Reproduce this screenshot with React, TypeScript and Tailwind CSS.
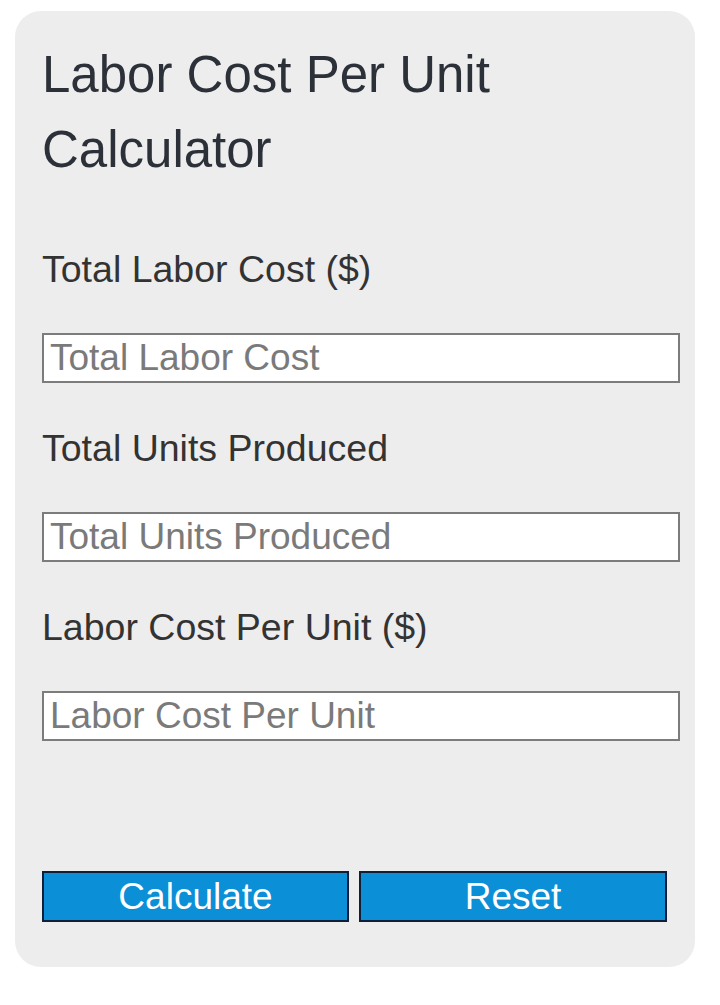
import React, { useState } from 'react';

const Field = ({
  label,
  placeholder,
  value,
  onChange,
  readOnly,
}: {
  label: string;
  placeholder: string;
  value: string;
  onChange?: (v: string) => void;
  readOnly?: boolean;
}) => (
  <div className="flex flex-col">
    <label className="text-[37.5px] leading-[42px] text-[#333333]">{label}</label>
    <input
      type="text"
      value={value}
      readOnly={readOnly}
      placeholder={placeholder}
      onChange={(e) => onChange && onChange(e.target.value)}
      className="mt-[43px] h-[50px] w-[638px] border-2 border-[#7c7c7c] bg-white px-[6px] text-[37px] text-[#333333] outline-none placeholder:text-[#7a7a7a]"
    />
  </div>
);

export default function App() {
  const [cost, setCost] = useState('');
  const [units, setUnits] = useState('');
  const [perUnit, setPerUnit] = useState('');

  const calculate = () => {
    const c = parseFloat(cost);
    const u = parseFloat(units);
    if (!isNaN(c) && !isNaN(u) && u !== 0) setPerUnit((c / u).toFixed(2));
  };

  const reset = () => {
    setCost('');
    setUnits('');
    setPerUnit('');
  };

  return (
    <div className="min-h-[1005px] bg-white pl-[15px] pt-[11px] font-['Liberation_Sans',Arial,sans-serif]">
      <div className="flex h-[956px] w-[680px] flex-col rounded-[26px] bg-[#ededed] pl-[27px] pt-[26px]">
        <h1 className="text-[51px] font-normal leading-[75px] text-[#2c3038]">
          Labor Cost Per Unit
          <br />
          Calculator
        </h1>
        <div className="mt-[61px] flex flex-col gap-[44px]">
          <Field label="Total Labor Cost ($)" placeholder="Total Labor Cost" value={cost} onChange={setCost} />
          <Field label="Total Units Produced" placeholder="Total Units Produced" value={units} onChange={setUnits} />
          <Field label="Labor Cost Per Unit ($)" placeholder="Labor Cost Per Unit" value={perUnit} readOnly />
        </div>
        <div className="mt-[130px] flex gap-[10px]">
          <button
            onClick={calculate}
            className="h-[51px] w-[307px] border-2 border-[#0f1f3a] bg-[#0b8fd7] text-[37px] leading-none text-white"
          >
            Calculate
          </button>
          <button
            onClick={reset}
            className="h-[51px] w-[308px] border-2 border-[#0f1f3a] bg-[#0b8fd7] text-[37px] leading-none text-white"
          >
            Reset
          </button>
        </div>
      </div>
    </div>
  );
}
